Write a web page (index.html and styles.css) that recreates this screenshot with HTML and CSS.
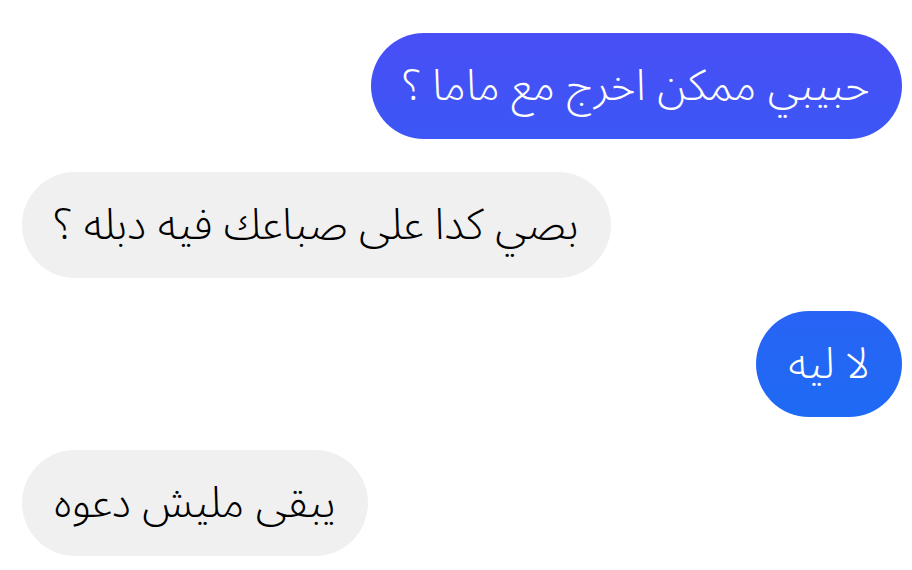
FILE: index.html
```html
<!DOCTYPE html>
<html lang="ar" dir="rtl">
    <head>
        <meta charset="utf-8">
        <title>Chat</title>
        <link rel="stylesheet" href="styles.css">
    </head>
    <body>
        <div class="chat">
            <div class="msg sent">حبيبي ممكن اخرج مع ماما ؟</div>
            <div class="msg received">بصي كدا على صباعك فيه دبله ؟</div>
            <div class="msg sent">لا ليه</div>
            <div class="msg received">يبقى مليش دعوه</div>
        </div>
    </body>
</html>
```

FILE: styles.css
```css
html, body {
    margin: 0;
    padding: 0;
    background-color: #ffffff;
}

body {
    font-family: "Noto Sans Arabic", "DejaVu Sans", sans-serif;
    width: 912px;
    height: 570px;
    overflow: hidden;
}

.chat {
    display: flex;
    flex-direction: column;
    gap: 33px;
    padding: 33px 10px 0 22px;
}

.msg {
    height: 106px;
    box-sizing: border-box;
    padding: 0 32px;
    border-radius: 53px;
    display: flex;
    align-items: center;
    font-size: 43px;
    font-weight: 350;
    line-height: 1;
    white-space: nowrap;
}

/* messenger style: one gradient behind all sent bubbles */
.sent {
    align-self: flex-start;
    color: #ffffff;
    background: linear-gradient(180deg, #4c4cf6 0%, #0c76f4 100%);
    background-attachment: fixed;
}

.received {
    align-self: flex-end;
    color: #000000;
    background-color: #f0f0f0;
}
```
